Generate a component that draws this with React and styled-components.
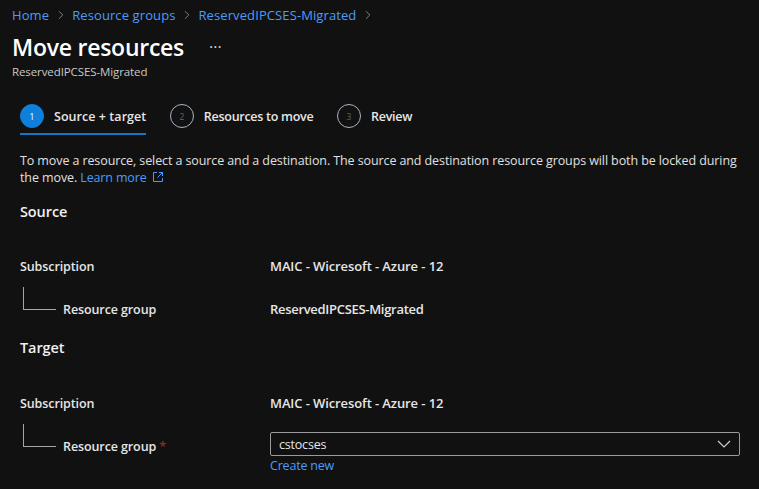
import React from 'react';
import styled, { createGlobalStyle } from 'styled-components';
import { ChevronRight } from 'lucide-react';

const GlobalStyle = createGlobalStyle`
  html, body {
    margin: 0;
    height: 100%;
    background: #111111;
    overflow: hidden;
  }

  body {
    font-family: "Open Sans", "Noto Sans", "Liberation Sans", sans-serif;
    font-size: 12.5px;
    color: #e6e6e6;
  }
`;

const Page = styled.div`
  width: 759px;
  height: 489px;
  overflow: hidden;
  background: #111111;
`;

const Breadcrumb = styled.nav`
  display: flex;
  align-items: center;
  height: 16px;
  padding: 7px 0 0 12px;
  color: #9a9a9a;
`;

const Crumb = styled.a`
  color: #4b9bff;
  font-size: 13px;
  letter-spacing: 0.1px;
`;

const CrumbSep = styled(ChevronRight)`
  width: 14px;
  height: 14px;
  margin: 0 4.5px;
  stroke-width: 1.4;
`;

const TitleRow = styled.div`
  display: flex;
  align-items: center;
  margin: 9px 0 0 12px;
  height: 30px;
`;

const Title = styled.h1`
  margin: 0;
  font-size: 23px;
  font-weight: 600;
  color: #ffffff;
  letter-spacing: -0.25px;
`;

const More = styled.span`
  margin-left: 25px;
  font-size: 16px;
  line-height: 12px;
  color: #cfcfcf;
`;

const Subtitle = styled.div`
  margin: 2px 0 0 12px;
  font-size: 11.5px;
  line-height: 16px;
  color: #c8c8c8;
  letter-spacing: -0.1px;
`;

const Steps = styled.div`
  display: flex;
  margin: 24px 0 0 20px;
  gap: 23.5px;
`;

const Step = styled.div`
  display: flex;
  align-items: flex-start;
  gap: 10px;
  height: 29px;
  border-bottom: 2px solid ${p => (p.$active ? '#1277c7' : 'transparent')};
`;

const StepCircle = styled.span`
  display: flex;
  align-items: center;
  justify-content: center;
  box-sizing: border-box;
  width: 24px;
  height: 24px;
  border-radius: 50%;
  font-size: 8.5px;
  background: ${p => (p.$active ? '#0f7fdc' : 'transparent')};
  border: 1px solid ${p => (p.$active ? '#0f7fdc' : '#a8b4c4')};
  color: ${p => (p.$active ? '#ffffff' : '#666666')};
`;

const StepLabel = styled.span`
  font-size: 12.5px;
  line-height: 26px;
  font-weight: 600;
  color: #e6e6e6;
  letter-spacing: ${p => p.$spacing}px;
`;

const Description = styled.p`
  margin: 17px 0 0 20px;
  width: 725px;
  font-size: 12.5px;
  line-height: 17px;
  color: #e0e0e0;
  letter-spacing: -0.1px;
`;

const LearnLink = styled.a`
  color: #4b9bff;
  letter-spacing: -0.15px;
`;

const ExternalIcon = styled.svg`
  width: 12px;
  height: 12px;
  margin-left: 5px;
  vertical-align: -1px;
`;

const SectionTitle = styled.h2`
  margin: ${p => p.$top}px 0 0 20px;
  font-size: 14.5px;
  line-height: 20px;
  font-weight: 600;
  color: #f0f0f0;
  letter-spacing: -0.1px;
`;

const Rows = styled.div`
  margin-top: ${p => p.$top}px;
`;

const Row = styled.div`
  display: grid;
  grid-template-columns: 250px 470px;
  margin-left: 20px;
  height: ${p => p.$height}px;
  align-items: center;
`;

const LabelCell = styled.div`
  display: flex;
  align-items: center;
`;

const Label = styled.span`
  font-size: 12.5px;
  font-weight: 600;
  color: #e6e6e6;
  letter-spacing: -0.1px;
`;

const Required = styled.span`
  margin-left: 3px;
  color: #b3262e;
`;

const Value = styled.span`
  font-size: 13px;
  font-weight: 600;
  color: #e6e6e6;
  letter-spacing: ${p => p.$spacing}px;
`;

const Connector = styled.span`
  box-sizing: border-box;
  flex: none;
  width: 33px;
  height: 23px;
  margin: -22px 7px 0 3px;
  border-left: 1px solid #a6a6a6;
  border-bottom: 1px solid #a6a6a6;
`;

const SelectBox = styled.div`
  display: flex;
  align-items: center;
  justify-content: space-between;
  box-sizing: border-box;
  height: 24px;
  margin-bottom: 4px;
  padding: 0 8px;
  border: 1px solid #9a9a9a;
  border-radius: 2px;
  font-size: 12.5px;
  letter-spacing: -0.2px;
  color: #e6e6e6;
`;

const SelectChevron = styled.svg`
  width: 14px;
  height: 8px;
`;

const CreateNew = styled.a`
  display: block;
  margin: -4px 0 0 270px;
  font-size: 12.5px;
  line-height: 17px;
  color: #4b9bff;
  letter-spacing: -0.2px;
`;

const TreeRow = ({ label, required, children }) => (
  <Row $height={30}>
    <LabelCell>
      <Connector />
      <Label>{label}</Label>
      {required && <Required>*</Required>}
    </LabelCell>
    {children}
  </Row>
);

export default function App() {
  return (
    <Page>
      <GlobalStyle />
      <Breadcrumb>
        <Crumb>Home</Crumb>
        <CrumbSep />
        <Crumb>Resource groups</Crumb>
        <CrumbSep />
        <Crumb>ReservedIPCSES-Migrated</Crumb>
        <CrumbSep />
      </Breadcrumb>
      <TitleRow>
        <Title>Move resources</Title>
        <More>···</More>
      </TitleRow>
      <Subtitle>ReservedIPCSES-Migrated</Subtitle>

      <Steps>
        <Step $active>
          <StepCircle $active>1</StepCircle>
          <StepLabel $spacing={0.05}>Source + target</StepLabel>
        </Step>
        <Step>
          <StepCircle>2</StepCircle>
          <StepLabel $spacing={-0.27}>Resources to move</StepLabel>
        </Step>
        <Step>
          <StepCircle>3</StepCircle>
          <StepLabel $spacing={-0.25}>Review</StepLabel>
        </Step>
      </Steps>

      <Description>
        To move a resource, select a source and a destination. The source and destination resource groups will both be locked during
        the move. <LearnLink>Learn more
          <ExternalIcon viewBox="0 0 12 12" fill="none" stroke="#4b9bff" strokeWidth="1">
            <path d="M5 1.5H1.5V10.5H10.5V7M7 1.5H10.5V5M10.5 1.5L5.5 6.5" />
          </ExternalIcon>
        </LearnLink>
      </Description>

      <SectionTitle $top={16}>Source</SectionTitle>
      <Rows $top={29}>
        <Row $height={30}>
          <Label>Subscription</Label>
          <Value $spacing={-0.1}>MAIC - Wicresoft - Azure - 12</Value>
        </Row>
        <Rows $top={13}>
          <TreeRow label="Resource group">
            <Value $spacing={-0.3}>ReservedIPCSES-Migrated</Value>
          </TreeRow>
        </Rows>
      </Rows>

      <SectionTitle $top={14}>Target</SectionTitle>
      <Rows $top={30}>
        <Row $height={30}>
          <Label>Subscription</Label>
          <Value $spacing={-0.1}>MAIC - Wicresoft - Azure - 12</Value>
        </Row>
        <Rows $top={13}>
          <TreeRow label="Resource group" required>
            <SelectBox>
              cstocses
              <SelectChevron viewBox="0 0 14 8" fill="none" stroke="#d0d0d0" strokeWidth="1.2">
                <path d="M1 1L7 7L13 1" />
              </SelectChevron>
            </SelectBox>
          </TreeRow>
        </Rows>
      </Rows>
      <CreateNew>Create new</CreateNew>
    </Page>
  );
}
